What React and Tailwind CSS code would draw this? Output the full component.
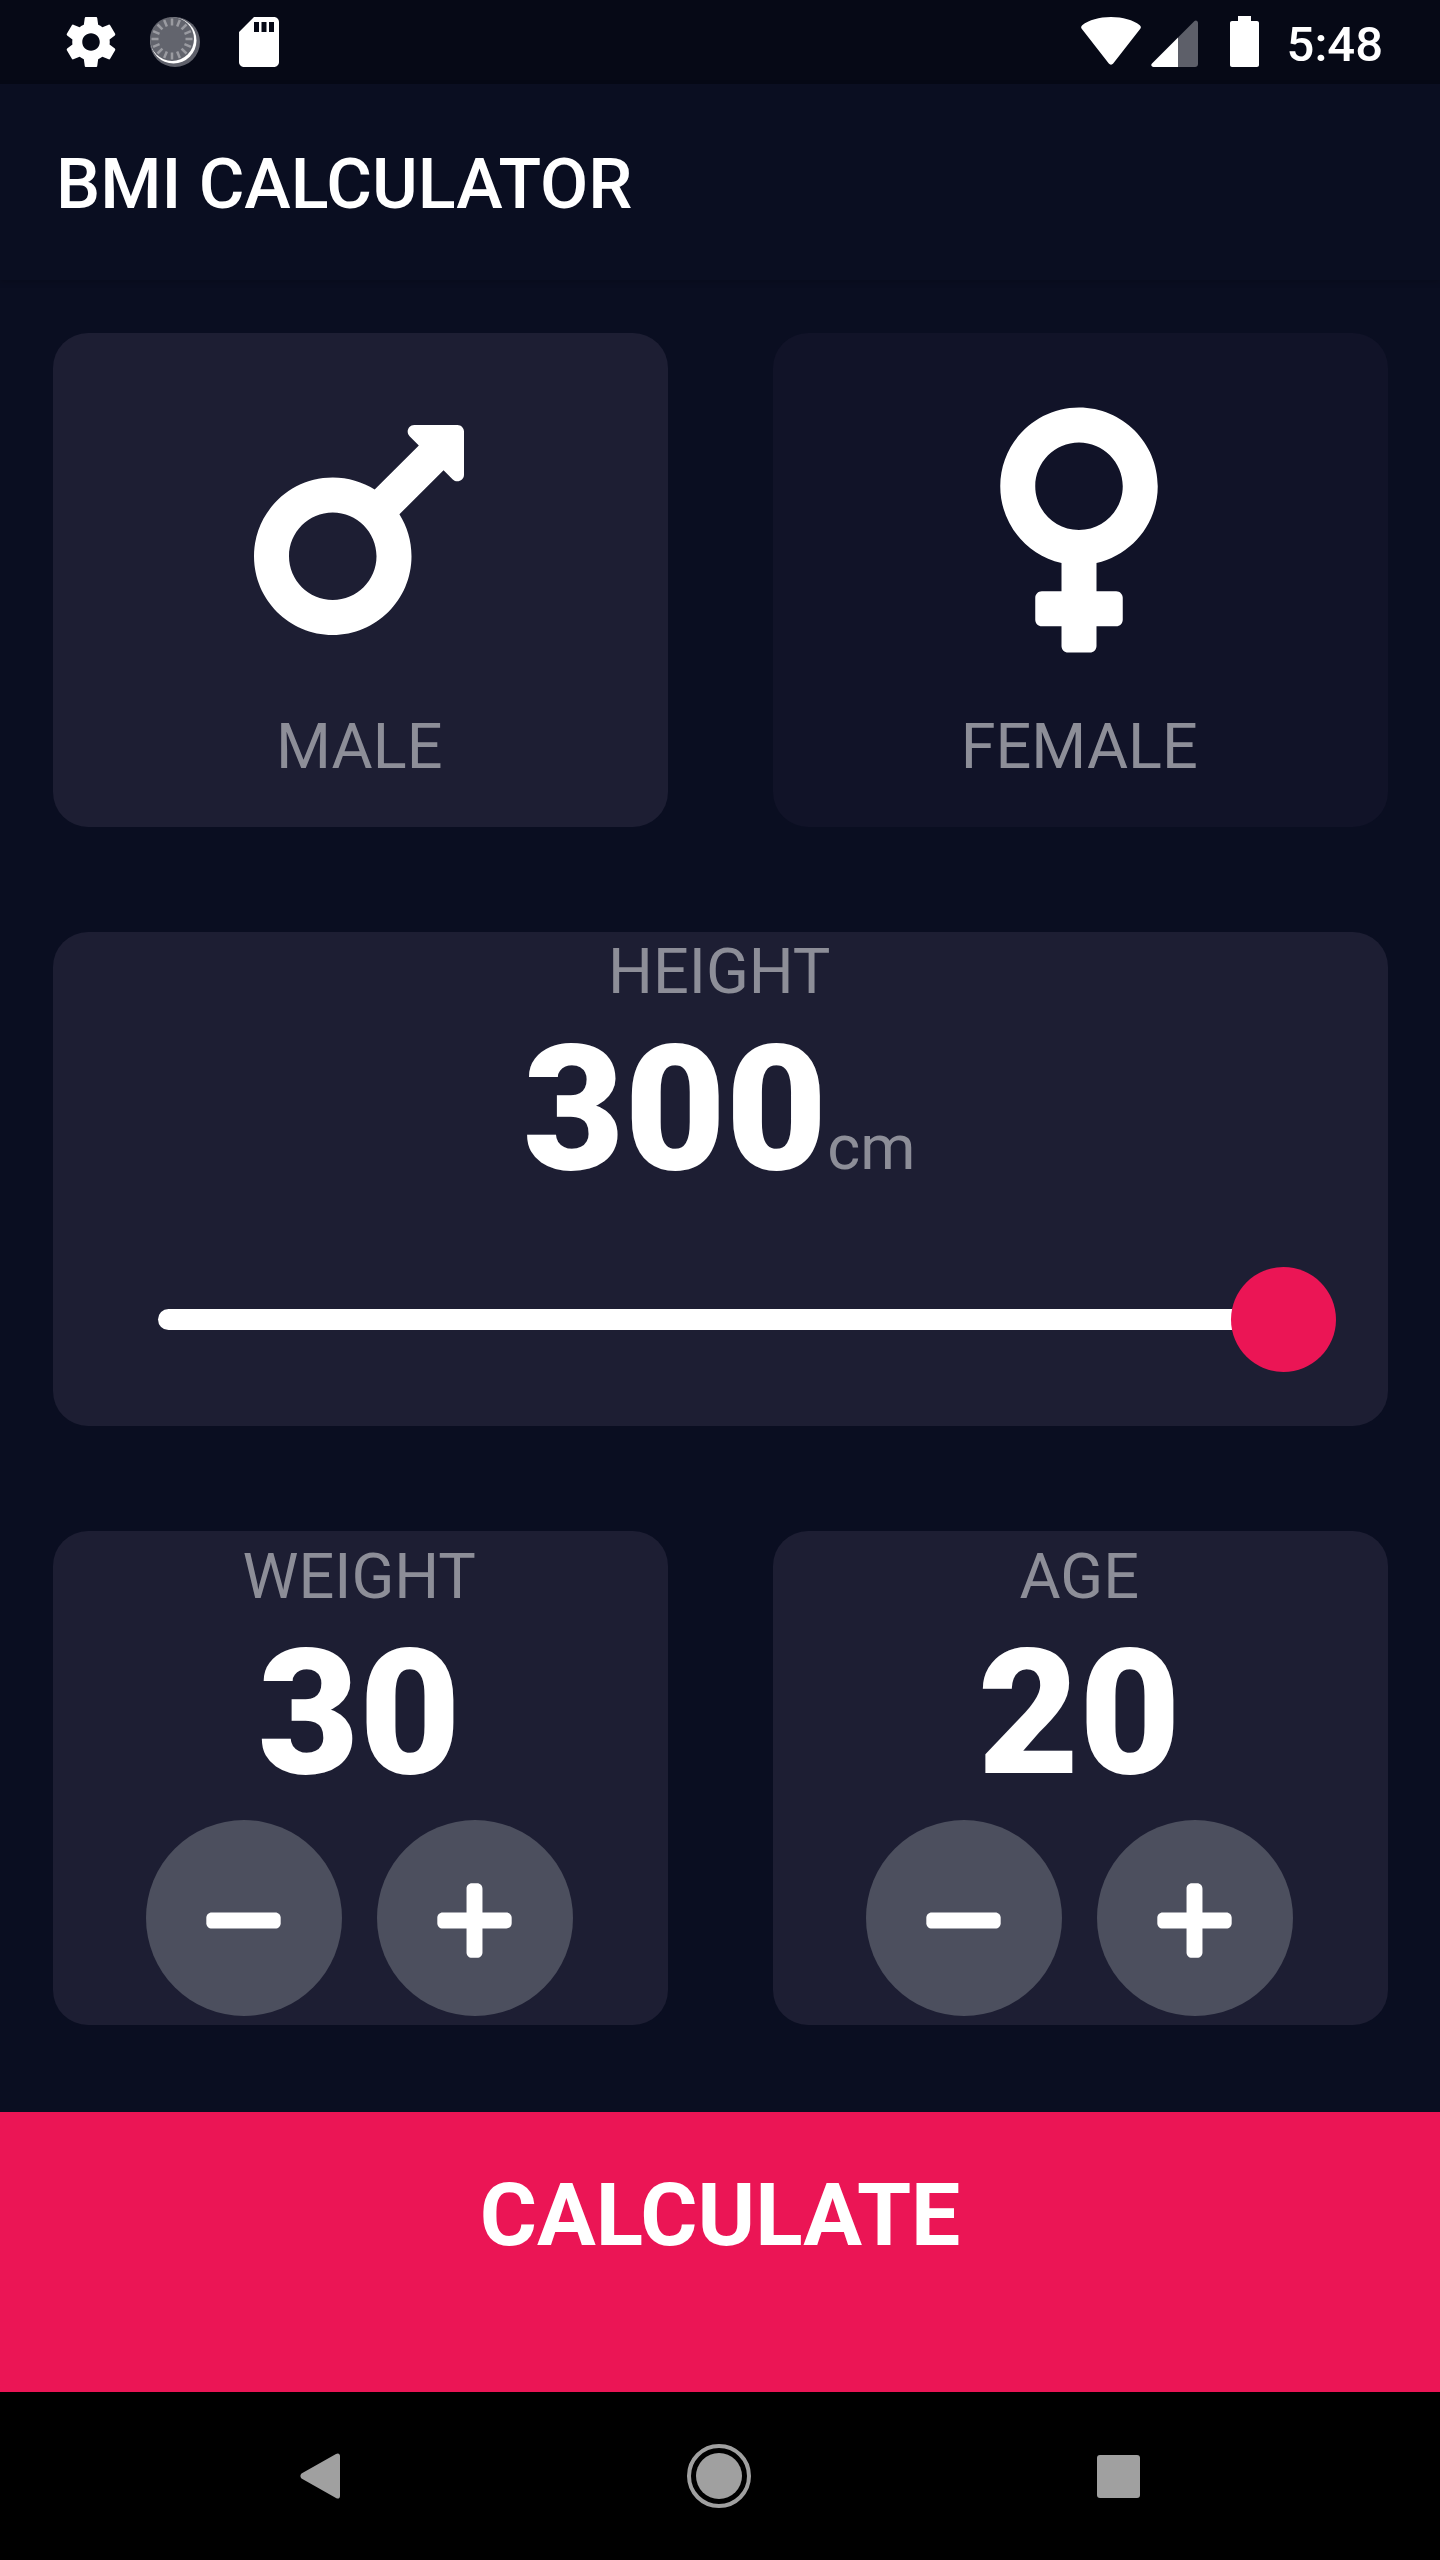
import React from 'react'
import { FaMars, FaVenus, FaPlus, FaMinus } from 'react-icons/fa'

const GearIcon = () => (
  <svg width="60" height="60" viewBox="0 0 24 24" fill="#fff">
    <path d="M19.43 12.98c.04-.32.07-.64.07-.98s-.03-.66-.07-.98l2.11-1.65c.19-.15.24-.42.12-.64l-2-3.46c-.12-.22-.39-.3-.61-.22l-2.49 1c-.52-.4-1.08-.73-1.69-.98l-.38-2.65C14.46 2.18 14.25 2 14 2h-4c-.25 0-.46.18-.49.42l-.38 2.65c-.61.25-1.17.59-1.69.98l-2.49-1c-.23-.09-.49 0-.61.22l-2 3.46c-.13.22-.07.49.12.64l2.11 1.65c-.04.32-.07.65-.07.98s.03.66.07.98l-2.11 1.65c-.19.15-.24.42-.12.64l2 3.46c.12.22.39.3.61.22l2.49-1c.52.4 1.08.73 1.69.98l.38 2.65c.03.24.24.42.49.42h4c.25 0 .46-.18.49-.42l.38-2.65c.61-.25 1.17-.59 1.69-.98l2.49 1c.23.09.49 0 .61-.22l2-3.46c.12-.22.07-.49-.12-.64l-2.11-1.65zM12 15.5c-1.93 0-3.5-1.57-3.5-3.5s1.57-3.5 3.5-3.5 3.5 1.57 3.5 3.5-1.57 3.5-3.5 3.5z" />
  </svg>
)

const DiscIcon = () => (
  <svg width="50" height="50" viewBox="0 0 50 50">
    <circle cx="25" cy="25" r="25" fill="#5f616b" />
    <circle cx="23.500" cy="23.500" r="23" fill="#fff" />
    <circle cx="22" cy="22" r="22" fill="#62646d" />
    {[...Array(16)].map((_, i) => (
      <rect key={i} x="20.750" y="1.500" width="2.500" height="7" fill="#9a9ba1" transform={`rotate(${i * 22.5} 22 22)`} />
    ))}
  </svg>
)

const SdIcon = () => (
  <svg width="60" height="60" viewBox="0 0 24 24" fill="#fff">
    <path d="M18 2h-8L4.02 8 4 20c0 1.1.9 2 2 2h12c1.1 0 2-.9 2-2V4c0-1.1-.9-2-2-2zm-6 6h-2V4h2v4zm3 0h-2V4h2v4zm3 0h-2V4h2v4z" />
  </svg>
)

const WifiIcon = () => (
  <svg width="60" height="48" viewBox="0 0 60 48" fill="#fff">
    <path d="M30 0C18 0 8 3 1.2 8.2c-1.2.9-1.4 2.4-.5 3.6L27.8 46.6c1.1 1.4 3.3 1.4 4.4 0L59.3 11.8c.9-1.2.7-2.7-.5-3.6C52 3 42 0 30 0z" />
  </svg>
)

const SignalIcon = () => (
  <svg width="47" height="47" viewBox="0 0 47 47">
    <path d="M47 3c0-2-2-3.500-3.500-2L27 17.500V47h17c1.700 0 3-1.300 3-3z" fill="#5d5f69" />
    <path d="M27 17.500L1 43.500C-.5 45 .5 47 2.500 47H27z" fill="#fff" />
  </svg>
)

const BatteryIcon = () => (
  <svg width="29" height="51" viewBox="0 0 29 51" fill="#fff">
    <path d="M8 0h13v5h6c1.100 0 2 .9 2 2v42c0 1.100-.9 2-2 2H2c-1.100 0-2-.9-2-2V7c0-1.100.9-2 2-2h6z" />
  </svg>
)

const StatusBar = () => (
  <div className="h-[84px] shrink-0 bg-[#060916] flex justify-between">
    <div className="flex items-start pl-[61px] pt-[12px]">
      <GearIcon />
      <div className="ml-[29px] mt-[5px]"><DiscIcon /></div>
      <div className="ml-[29px]"><SdIcon /></div>
    </div>
    <div className="flex items-start pr-[57px] pt-[16px]">
      <div className="mt-[1px]"><WifiIcon /></div>
      <div className="ml-[10px] mt-[4px]"><SignalIcon /></div>
      <div className="ml-[32px]"><BatteryIcon /></div>
      <span className="ml-[28px] text-[49px] leading-[57px] font-medium text-white">5:48</span>
    </div>
  </div>
)

const Card = ({ active, className, children }) => (
  <div className={`mt-[52.5px] mb-[52.5px] ml-[53px] mr-[52.5px] pr-[2px] rounded-[35px] flex flex-col items-center ${active ? 'bg-[#1d1e33]' : 'bg-[#111328]'} ${className || ''}`}>
    {children}
  </div>
)

const Label = ({ children }) => (
  <span className="text-[63px] leading-[74px] text-[#8d8e98]">{children}</span>
)

const GenderCard = ({ active, icon, label }) => (
  <Card active={active} className="justify-center">
    <div className="h-[280px] flex items-center justify-center text-white translate-y-[14px]">{icon}</div>
    <div className="mt-[54px]"><Label>{label}</Label></div>
  </Card>
)

const RoundButton = ({ children }) => (
  <button className="w-[196px] h-[196px] rounded-full bg-[#4c4f5e] text-white flex items-center justify-center">
    <span className="translate-y-[3px]">{children}</span>
  </button>
)

const Counter = ({ label, value }) => (
  <Card active>
    <div className="mt-[9px]"><Label>{label}</Label></div>
    <span className="text-[175px] leading-[205px] font-black text-white mt-[-3px]">{value}</span>
    <div className="flex gap-[35px] mt-[4px]">
      <RoundButton><FaMinus size={85} /></RoundButton>
      <RoundButton><FaPlus size={85} /></RoundButton>
    </div>
  </Card>
)

export default function App() {
  return (
    <div className="w-[1440px] h-[2560px] flex flex-col bg-[#0a0e21] font-['Roboto',sans-serif]">
      <StatusBar />
      <div className="h-[196px] shrink-0 flex items-center pl-[56px] pt-[3px] bg-[#0a0e21] shadow-[0_2px_6px_rgba(0,0,0,0.18)] z-10">
        <h1 className="text-[70px] leading-[82px] font-medium text-white">BMI CALCULATOR</h1>
      </div>

      <div className="flex-1 flex flex-col min-h-0">
        <div className="flex-1 grid grid-cols-2 min-h-0">
          <GenderCard active icon={<FaMars size={280} />} label="MALE" />
          <GenderCard icon={<FaVenus size={280} />} label="FEMALE" />
        </div>

        <div className="flex-1 grid grid-cols-1 min-h-0">
          <Card active>
            <div className="mt-[3px]"><Label>HEIGHT</Label></div>
            <div className="flex items-baseline mt-[-2px]">
              <span className="text-[175px] leading-[205px] font-black text-white">300</span>
              <span className="text-[63px] text-[#8d8e98]">cm</span>
            </div>
            <div className="w-full pl-[105px] pr-[50px] mt-[55px] flex items-center">
              <div className="flex-1 h-[21px] rounded-l-full bg-white"></div>
              <div className="w-[105px] h-[105px] rounded-full bg-[#eb1555] ml-[-52px] shrink-0"></div>
            </div>
          </Card>
        </div>

        <div className="flex-1 grid grid-cols-2 min-h-0">
          <Counter label="WEIGHT" value="30" />
          <Counter label="AGE" value="20" />
        </div>
      </div>

      <div className="h-[280px] shrink-0 mt-[35px] bg-[#eb1555] flex justify-center pt-[52px]">
        <span className="text-[87.5px] leading-[103px] font-bold text-white">CALCULATE</span>
      </div>

      <div className="h-[168px] shrink-0 bg-black flex items-center justify-center">
        <svg width="40" height="46" viewBox="0 0 40 46" fill="#a0a0a0" className="mr-[347px]">
          <path d="M36 1L1.500 20.500c-1.500 1.500-1.500 3.500 0 5L36 45c2 1.200 4 .5 4-2V3c0-2.500-2-3.200-4-2z" />
        </svg>
        <div className="w-[64px] h-[64px] rounded-full border-[4px] border-[#a0a0a0] flex items-center justify-center">
          <div className="w-[46px] h-[46px] rounded-full bg-[#a0a0a0]"></div>
        </div>
        <div className="w-[43px] h-[43px] rounded-[3px] bg-[#a0a0a0] ml-[346px]"></div>
      </div>
    </div>
  )
}
